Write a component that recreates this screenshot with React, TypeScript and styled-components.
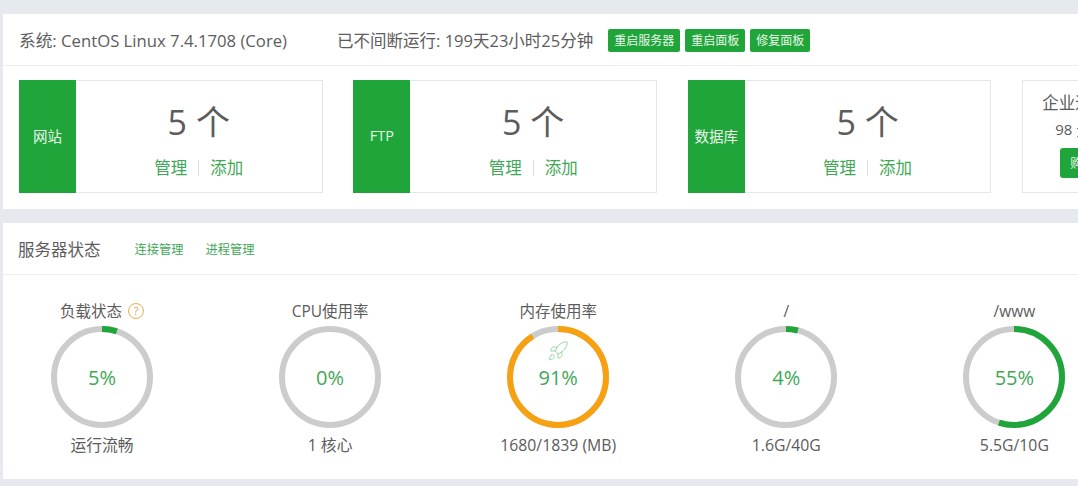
import styled, { createGlobalStyle } from 'styled-components'
import { Rocket } from 'lucide-react'

const GlobalStyle = createGlobalStyle`
  html, body {
    margin: 0;
    height: 486px;
    overflow: hidden;
    background: #e6e9ed;
  }
  body {
    font-family: "Open Sans", "Noto Sans CJK SC", sans-serif;
    color: #555;
  }
`

const Page = styled.div`
  width: 1078px;
  height: 486px;
  padding: 14px 0 0 3px;
  box-sizing: border-box;
  overflow: hidden;
  display: flex;
  flex-direction: column;
  gap: 14px;
`
const Panel = styled.section<{ $height: number }>`
  background: #fff;
  width: 1075px;
  height: ${p => p.$height}px;
  flex: none;
  overflow: hidden;
`
const PanelHead = styled.header`
  height: 51px;
  box-sizing: content-box;
  border-bottom: 1px solid #eee;
  display: flex;
  align-items: center;
  padding-left: 16px;
  white-space: nowrap;
`
const HeadText = styled.span<{ $gap?: number; $size?: number }>`
  font-size: ${p => p.$size ?? 16.7}px;
  color: #5c5c5c;
  margin-right: ${p => p.$gap ?? 0}px;
`
const SmallButton = styled.button`
  border: 0;
  border-radius: 2px;
  background: #20a53a;
  color: #e8f6ea;
  font: inherit;
  font-size: 12px;
  height: 23px;
  line-height: 23px;
  padding: 0 6px;
  margin: 1px 5px 0 0;
`
const CardRow = styled.div`
  display: flex;
  gap: 30.9px;
  padding: 14px 0 0 16px;
  width: 1300px;
`
const Card = styled.div`
  width: 303.5px;
  height: 113px;
  box-sizing: border-box;
  border: 1px solid #e6e6e6;
  display: flex;
  flex: none;
`
const CardLabel = styled.div`
  width: 57px;
  margin: -1px 0 -1px -1px;
  padding-bottom: 2px;
  box-sizing: border-box;
  background: #20a53a;
  color: #e8f6ea;
  font-size: 14.5px;
  display: flex;
  align-items: center;
  justify-content: center;
  white-space: nowrap;
`
const CardBody = styled.div`
  flex: 1;
  display: flex;
  flex-direction: column;
  align-items: center;
`
const Count = styled.div`
  font-size: 34px;
  line-height: 40px;
  margin-top: 21px;
  color: #5c5c5c;
`
const CardLinks = styled.div`
  display: flex;
  align-items: center;
  margin-top: 15px;
  font-size: 16.5px;
  line-height: 22px;
  color: #3fa857;
`
const Divider = styled.i`
  width: 1px;
  height: 16px;
  background: #ddd;
  margin: 0 11px;
`
const PromoCard = styled(Card)`
  flex-direction: column;
  align-items: flex-start;
  padding: 9px 0 0 19px;
  font-size: 16.5px;
  color: #5c5c5c;
`
const PromoPrice = styled.div`
  font-size: 15px;
  margin: 4px 0 0 13px;
`
const PromoButton = styled(SmallButton)`
  margin: 9px 0 0 18px;
  height: 30px;
  width: 60px;
  padding: 0 10px;
  border-radius: 3px;
  text-align: left;
`
const SectionTitle = styled.span`
  font-size: 16.5px;
  color: #5c5c5c;
  margin: 0 34px 0 -1px;
`
const SectionLink = styled.a`
  font-size: 12.25px;
  color: #3fa857;
  margin-right: 22px;
`
const Gauges = styled.div`
  display: flex;
  gap: 30.1px;
  padding-top: 25px;
`
const Gauge = styled.div`
  width: 198px;
  flex: none;
  display: flex;
  flex-direction: column;
  align-items: center;
  font-size: 15.5px;
  color: #5c5c5c;
`
const GaugeTitle = styled.div`
  line-height: 22px;
  display: flex;
  align-items: center;
  gap: 6px;
  white-space: nowrap;
`
const HelpMark = styled.span`
  width: 16px;
  height: 16px;
  box-sizing: border-box;
  border: 1px solid #f0ad4e;
  border-radius: 50%;
  color: #e8a33d;
  font-size: 11px;
  line-height: 14px;
  text-align: center;
`
const Ring = styled.div`
  position: relative;
  width: 102px;
  height: 102px;
  margin-top: 4px;
`
const RingValue = styled.div`
  position: absolute;
  inset: 0;
  display: flex;
  align-items: center;
  justify-content: center;
  font-size: 20px;
  color: #3fa857;
`
const RocketMark = styled.div`
  position: absolute;
  top: 14px;
  left: 0;
  right: 0;
  display: flex;
  justify-content: center;
  color: #8fd39d;
`
const GaugeFoot = styled.div`
  font-size: 15.8px;
  line-height: 22px;
  margin-top: 6px;
  white-space: nowrap;
`

type GaugeData = {
  title: string
  value: number
  color: string
  foot: string
  help?: boolean
  rocket?: boolean
}

const gauges: GaugeData[] = [
  { title: '负载状态', value: 5, color: '#20a53a', foot: '运行流畅', help: true },
  { title: 'CPU使用率', value: 0, color: '#20a53a', foot: '1 核心' },
  { title: '内存使用率', value: 91, color: '#f7a110', foot: '1680/1839 (MB)', rocket: true },
  { title: '/', value: 4, color: '#20a53a', foot: '1.6G/40G' },
  { title: '/www', value: 55, color: '#20a53a', foot: '5.5G/10G' },
]

const RingChart = ({ value, color }: { value: number; color: string }) => {
  const r = 48
  const c = 2 * Math.PI * r
  return (
    <svg width="102" height="102" viewBox="0 0 102 102">
      <circle cx="51" cy="51" r={r} fill="none" stroke="#cccccc" strokeWidth="6" />
      <circle
        cx="51"
        cy="51"
        r={r}
        fill="none"
        stroke={color}
        strokeWidth="6"
        strokeDasharray={`${(c * value) / 100} ${c}`}
        transform="rotate(-90 51 51)"
      />
    </svg>
  )
}

const stats = ['网站', 'FTP', '数据库']

export default function App() {
  return (
    <>
      <GlobalStyle />
      <Page>
        <Panel $height={195}>
          <PanelHead>
            <HeadText $gap={50}>系统: CentOS Linux 7.4.1708 (Core)</HeadText>
            <HeadText $gap={15} $size={16.5}>已不间断运行: 199天23小时25分钟</HeadText>
            <SmallButton>重启服务器</SmallButton>
            <SmallButton>重启面板</SmallButton>
            <SmallButton>修复面板</SmallButton>
          </PanelHead>
          <CardRow>
            {stats.map(s => (
              <Card key={s}>
                <CardLabel>{s}</CardLabel>
                <CardBody>
                  <Count>5 个</Count>
                  <CardLinks>
                    <span>管理</span>
                    <Divider />
                    <span>添加</span>
                  </CardLinks>
                </CardBody>
              </Card>
            ))}
            <PromoCard>
              <div>企业运维版</div>
              <PromoPrice>98 元/月</PromoPrice>
              <PromoButton>购买</PromoButton>
            </PromoCard>
          </CardRow>
        </Panel>
        <Panel $height={256}>
          <PanelHead>
            <SectionTitle>服务器状态</SectionTitle>
            <SectionLink>连接管理</SectionLink>
            <SectionLink>进程管理</SectionLink>
          </PanelHead>
          <Gauges>
            {gauges.map(g => (
              <Gauge key={g.title}>
                <GaugeTitle>
                  {g.title}
                  {g.help && <HelpMark>?</HelpMark>}
                </GaugeTitle>
                <Ring>
                  <RingChart value={g.value} color={g.color} />
                  {g.rocket && (
                    <RocketMark>
                      <Rocket size={22} strokeWidth={1} />
                    </RocketMark>
                  )}
                  <RingValue>{g.value}%</RingValue>
                </Ring>
                <GaugeFoot>{g.foot}</GaugeFoot>
              </Gauge>
            ))}
          </Gauges>
        </Panel>
      </Page>
    </>
  )
}
